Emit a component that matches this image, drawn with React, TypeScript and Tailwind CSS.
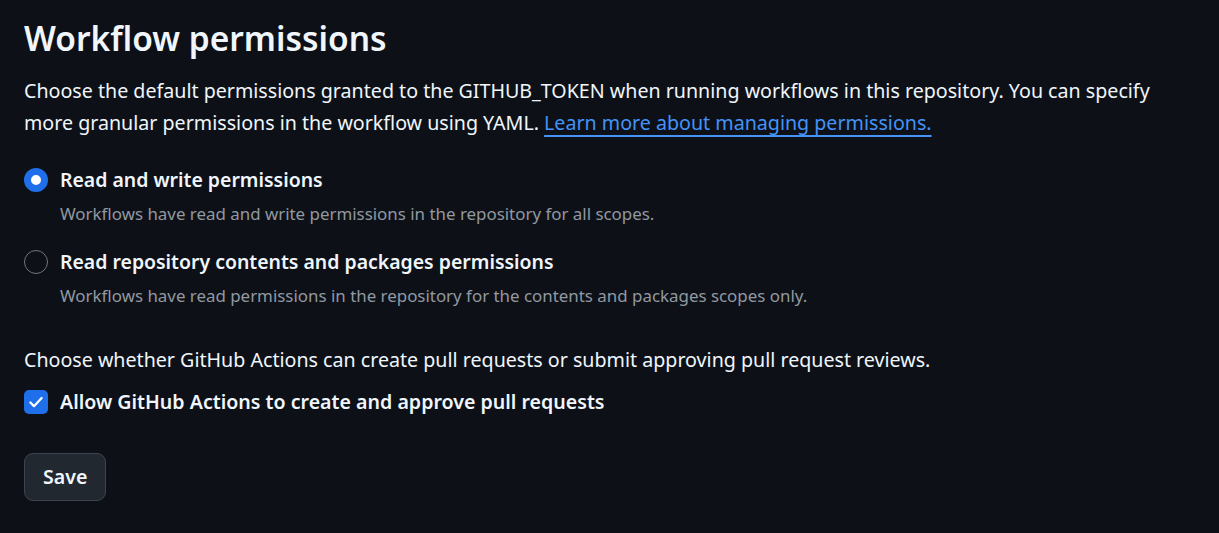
export default function App() {
  return (
    <div
      className="min-h-[533px] bg-[#0d1117] px-6 pt-[14px] text-[#f0f6fc]"
      style={{ fontFamily: '"Noto Sans", "Open Sans", sans-serif' }}
    >
      <h2 className="text-[33.5px] font-semibold leading-[48px]">Workflow permissions</h2>
      <p className="mt-[13px] text-[19.65px] leading-[32px]">
        Choose the default permissions granted to the GITHUB_TOKEN when running workflows in this repository. You can specify
        more granular permissions in the workflow using YAML.{" "}
        <a href="#" className="text-[#4493f8] underline underline-offset-[5px] decoration-[2px]">
          Learn more about managing permissions.
        </a>
      </p>

      <div className="mt-[25px] flex flex-col gap-[16px]">
        <Radio
          checked
          label="Read and write permissions"
          desc="Workflows have read and write permissions in the repository for all scopes."
        />
        <Radio
          label="Read repository contents and packages permissions"
          desc="Workflows have read permissions in the repository for the contents and packages scopes only."
        />
      </div>

      <p className="mt-[32px] text-[19.65px] leading-[32px]">
        Choose whether GitHub Actions can create pull requests or submit approving pull request reviews.
      </p>
      <label className="mt-[10px] flex items-center gap-3">
        <span className="flex h-6 w-6 items-center justify-center rounded-[5px] bg-[#1f6feb]">
          <svg viewBox="0 0 16 16" className="h-[18px] w-[18px]" fill="none" stroke="white" strokeWidth="2" strokeLinecap="round" strokeLinejoin="round">
            <path d="M3 8.5l3.2 3.2L13 4.5" />
          </svg>
        </span>
        <span className="text-[19.6px] font-semibold leading-[32px]">Allow GitHub Actions to create and approve pull requests</span>
      </label>

      <button className="mt-[35px] h-12 rounded-[9px] border border-[#3d444d] bg-[#212830] px-[18px] text-[19.6px] font-semibold text-[#f0f6fc]">
        Save
      </button>
    </div>
  );
}

function Radio({ checked, label, desc }: { checked?: boolean; label: string; desc: string }) {
  return (
    <div className="flex gap-3">
      <div className="flex h-[32px] items-center">
        {checked ? (
          <span className="box-border h-6 w-6 rounded-full border-[7px] border-[#1f6feb] bg-white" />
        ) : (
          <span className="box-border h-6 w-6 rounded-full border-[1.5px] border-[#6e7681]" />
        )}
      </div>
      <div>
        <div className="text-[19.45px] font-semibold leading-[32px]">{label}</div>
        <div className="mt-[2px] text-[16.9px] leading-[32px] text-[#9198a1]">{desc}</div>
      </div>
    </div>
  );
}
